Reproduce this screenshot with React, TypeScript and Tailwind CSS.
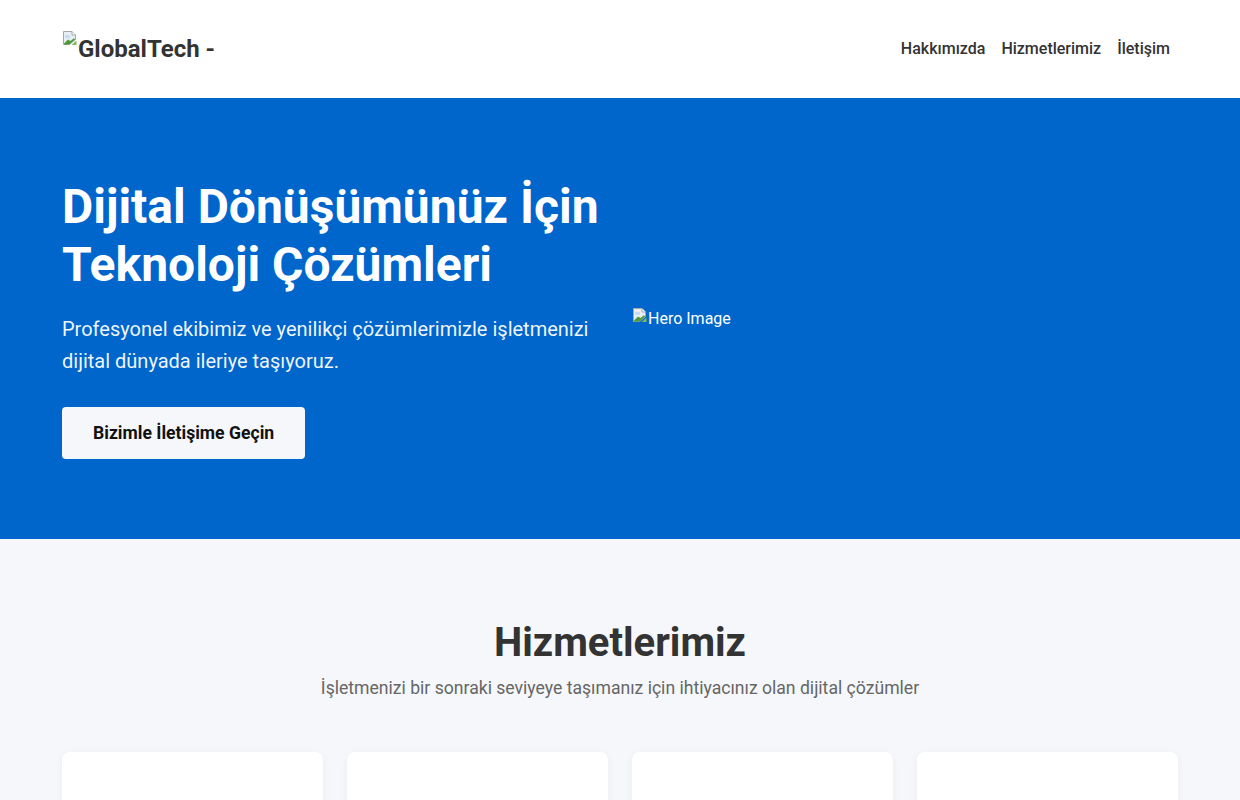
import React from 'react';

const font = { fontFamily: 'Roboto, "Liberation Sans", sans-serif' };

function BrokenImage({ className = '' }: { className?: string }) {
  return (
    <svg width="16" height="16" viewBox="0 0 16 16" className={'shrink-0 block ' + className}>
      <path d="M1.5 1.5h8.5l3.5 3.5v4.5l-6 5H1.5z" fill="#e8eef3" stroke="#a0a8ae" strokeWidth="1" />
      <path d="M10 1.5v3.5h3.5" fill="#ffffff" stroke="#a0a8ae" strokeWidth="1" />
      <path d="M2 13.5l4-4 2.5 1.5 3-2.5 2 0.5-6 5.5H2z" fill="#4e9a3a" />
      <path d="M3 5h5v3H3z" fill="#c6dcf0" />
      <path d="M9.5 15l5-4.5v4.5z" fill="#7fb860" />
    </svg>
  );
}

export default function App() {
  return (
    <div className="min-h-screen bg-white" style={font}>
      {/* Header */}
      <header className="bg-white h-[98px] flex items-center">
        <div className="w-full px-[62px] flex items-center justify-between">
          <a className="flex items-start whitespace-nowrap text-[24px] font-bold text-[#333] leading-none">
            <BrokenImage className="-mt-[7px]" />
            <span>GlobalTech -</span>
          </a>
          <nav className="flex items-center text-[16px] font-medium text-[#333]">
            <a className="px-2">Hakkımızda</a>
            <a className="px-2">Hizmetlerimiz</a>
            <a className="px-2">İletişim</a>
          </nav>
        </div>
      </header>

      {/* Hero */}
      <section className="bg-[#0066cc] text-white py-20">
        <div className="px-[62px] grid grid-cols-2 gap-6 items-center">
          <div>
            <h1 className="text-[48px] font-bold leading-[1.2] mb-5">
              Dijital Dönüşümünüz İçin Teknoloji Çözümleri
            </h1>
            <p className="text-[20px] leading-[32px] text-white/95 mb-[30px]">
              Profesyonel ekibimiz ve yenilikçi çözümlerimizle işletmenizi dijital dünyada ileriye taşıyoruz.
            </p>
            <a className="inline-flex items-center h-[52px] px-[31px] rounded-[4px] bg-[#f5f7fa] text-[#111] text-[17.6px] font-bold">
              Bizimle İletişime Geçin
            </a>
          </div>
          <div className="flex items-start text-[16px] leading-[20px] text-white">
            <BrokenImage className="-mt-[2px]" />
            <span>Hero Image</span>
          </div>
        </div>
      </section>

      {/* Services */}
      <section className="bg-[#f5f7fa] pt-20 pb-20">
        <div className="px-[62px]">
          <h2 className="text-center text-[40px] font-bold leading-[1.2] text-[#333] mb-2">Hizmetlerimiz</h2>
          <p className="text-center text-[17.6px] leading-[27px] text-[#666] mb-[50px]">
            İşletmenizi bir sonraki seviyeye taşımanız için ihtiyacınız olan dijital çözümler
          </p>
          <div className="grid grid-cols-4 gap-6">
            {[0, 1, 2, 3].map(i => (
              <div key={i} className="bg-white rounded-lg shadow-[0_2px_10px_rgba(0,0,0,0.05)] h-[280px]" />
            ))}
          </div>
        </div>
      </section>
    </div>
  );
}
